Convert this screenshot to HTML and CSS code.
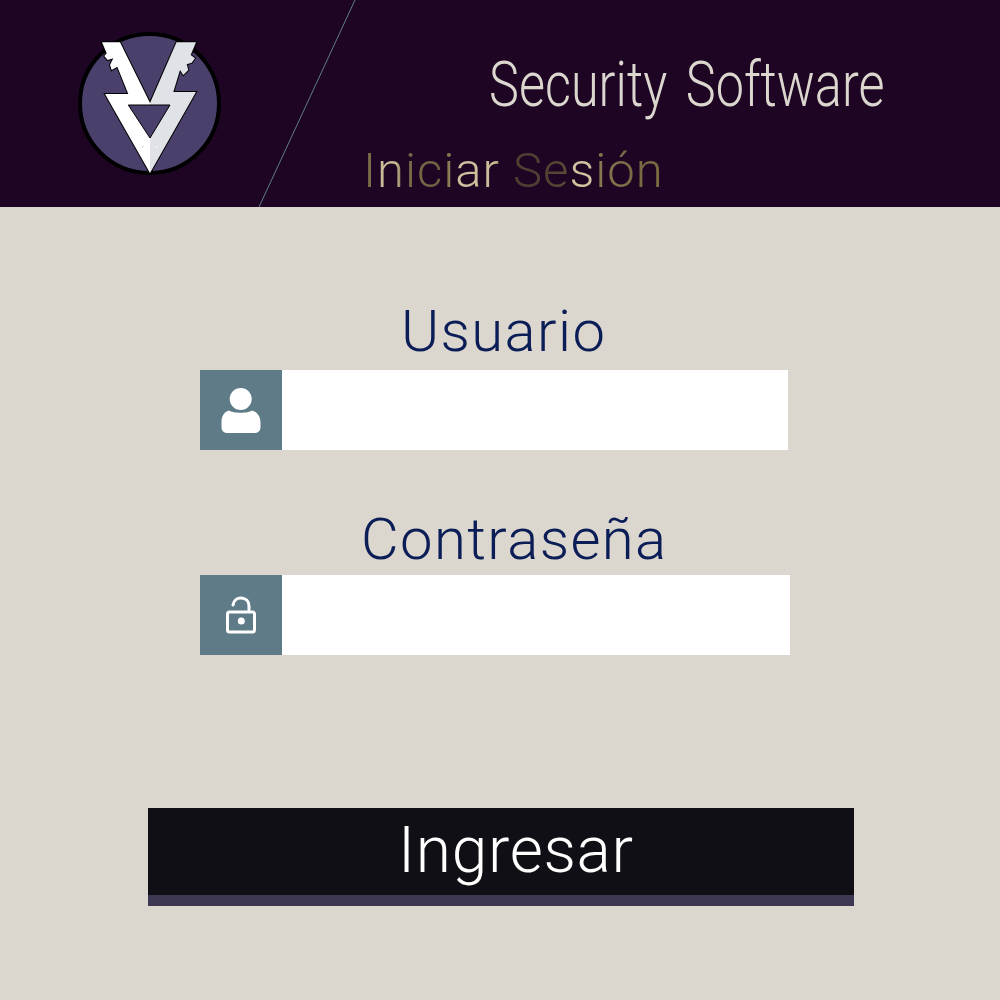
FILE: index.html
```html
<!DOCTYPE html>
<html lang="es">
<head>
  <meta charset="UTF-8" />
  <title>Security Software</title>
  <link rel="stylesheet" href="styles.css">
</head>
<body>
  <header class="top">
    <svg class="slash" width="100" height="207" viewBox="0 0 100 207"><line x1="97" y1="0" x2="1" y2="207" /></svg>
    <svg class="logo" width="180" height="170" viewBox="0 0 180 170">
      <circle cx="89.500" cy="83.500" r="69.500" fill="#4b3f6b" stroke="#000" stroke-width="4" />
      <path stroke="#000" stroke-width="2" d="M42 22.300H60L90 83L116.500 22.300H136L130.700 35L135 38.300L131.700 42.700L126.700 44.300L128.300 50L123.300 55L120 50L113.300 72H136L90 153L45 74H68.300L57.300 46.700L51.700 50L50 45L53.300 38.300L47.700 40L44.300 36L46.700 33.300Z" />
      <path fill="#fff" d="M42 22.300H60L90 83V153L45 74H68.300L57.300 46.700L51.700 50L50 45L53.300 38.300L47.700 40L44.300 36L46.700 33.300Z" />
      <path fill="#dfe2e6" d="M116.500 22.300H136L130.700 35L135 38.300L131.700 42.700L126.700 44.300L128.300 50L123.300 55L120 50L113.300 72H136L90 153V83Z" />
      <path fill="#4b3f6b" stroke="#000" stroke-width="1" d="M68.300 85H110L90 118Z" />
      <circle cx="82.700" cy="126.700" r="0.8" fill="#c9c9d2" />
      <circle cx="96.700" cy="126.700" r="0.8" fill="#fff" />
    </svg>
    <div class="titles">
      <h1>Security Software</h1>
      <h2>Iniciar Sesión</h2>
    </div>
  </header>

  <form class="login">
    <label class="name-user" for="user">Usuario</label>
    <div class="field">
      <span class="ico">
        <svg width="42" height="48" viewBox="0 0 42 48" fill="#fff"><circle cx="20.700" cy="13" r="11" /><path d="M1.500 37C1.500 30 4 26 9 24.500C13 27.500 28 27.500 32 24.500C37 26 40.500 30 40.500 37V41C40.500 45 38 47 34 47H8C4 47 1.500 45 1.500 41Z" /></svg>
      </span>
      <input id="user" type="text" />
    </div>

    <label class="name-pass" for="pass">Contraseña</label>
    <div class="field field-wide">
      <span class="ico">
        <svg width="32" height="40" viewBox="0 0 32 40" fill="none" stroke="#fff" stroke-width="3" stroke-linecap="round"><rect x="2.500" y="17" width="27" height="20" rx="2" /><path d="M8 10C8.500 5.500 12 3 16 3C20.500 3 24 6 24 11V15" /><circle cx="16.300" cy="26" r="3.500" fill="#fff" stroke="none" /></svg>
      </span>
      <input id="pass" type="password" />
    </div>

    <button type="button" class="go">Ingresar</button>
  </form>
</body>
</html>
```

FILE: styles.css
```css
* {
  box-sizing: border-box;
}

body {
  margin: 0;
  background: #dbd7cf;
  font-family: Roboto, "Liberation Sans", sans-serif;
}

.top {
  position: relative;
  display: flex;
  height: 207px;
  background: #1e0524;
}

.slash {
  position: absolute;
  left: 258px;
  top: 0;
}

.slash line {
  stroke: #5f7d8c;
  stroke-width: 1;
}

.logo {
  flex: none;
  margin: 20px 0 0 60px;
}

.titles {
  flex: 1;
}

h1 {
  margin: 51px 0 0 249px;
  font-size: 63px;
  line-height: 68px;
  font-weight: 300;
  word-spacing: 8px;
  color: #dbd7cf;
  white-space: nowrap;
  transform: scaleX(0.8);
  transform-origin: left;
}

/* letters fade in and out, so the colour runs across the line */
h2 {
  width: max-content;
  margin: 24px 0 0 123px;
  font-size: 49px;
  line-height: 56px;
  font-weight: 300;
  letter-spacing: 1px;
  white-space: nowrap;
  color: transparent;
  background: linear-gradient(90deg,
    #7a6b47 0, #7a6b47 10px, #c9bd98 15px, #c9bd98 33px, #7a6b47 40px,
    #6f6040 80px, #8b7b52 86px, #cfc3a0 92px, #c9bd98 132px, #4f3f33 148px,
    #4f3f33 178px, #5c4a36 204px, #d0c4a0 208px, #d0c4a0 228px, #8a7a50 233px,
    #7a6a45 268px, #7a6a40 297px);
  -webkit-background-clip: text;
  background-clip: text;
}

.login {
  display: flex;
  flex-direction: column;
  align-items: flex-start;
  padding-left: 148px;
}

label {
  font-size: 58px;
  font-weight: 300;
  line-height: 68px;
  letter-spacing: 1.4px;
  color: #0b1d56;
}

.name-user {
  margin: 90px 0 5px 253px;
}

.name-pass {
  margin: 55px 0 2px 213px;
}

.field {
  display: flex;
  width: 588px;
  height: 80px;
  margin-left: 52px;
}

.field-wide {
  width: 590px;
}

.ico {
  flex: none;
  display: flex;
  align-items: center;
  justify-content: center;
  width: 82px;
  background: #5f7b88;
}

input {
  flex: 1;
  min-width: 0;
  border: none;
  background: #fff;
}

.go {
  width: 706px;
  height: 98px;
  margin-top: 153px;
  padding: 0 0 2px 30px;
  border: none;
  border-bottom: 11px solid #3d3752;
  background: #0f0f15;
  color: #fff;
  font-family: inherit;
  font-size: 64px;
  font-weight: 300;
  letter-spacing: 0.7px;
}
```
